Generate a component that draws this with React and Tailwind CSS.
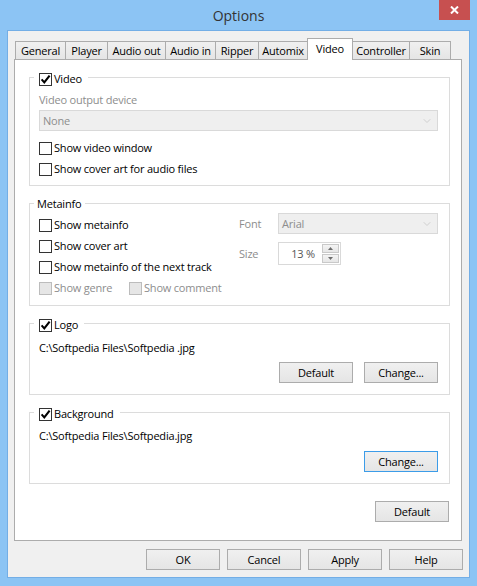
import { ChevronDown } from "lucide-react";

const font = "font-['Segoe_UI','Open_Sans',sans-serif]";

function Box({ checked, disabled }) {
  return (
    <span
      className={`w-[13px] h-[13px] border flex items-center justify-center shrink-0 ${
        disabled ? "border-[#bcbcbc] bg-[#e6e6e6]" : "border-[#333333] bg-white"
      }`}
    >
      {checked && (
        <svg width="11" height="11" viewBox="0 0 11 11">
          <path d="M1.6 5.4 L4.3 8.4 L9.6 1.7" fill="none" stroke="#000" strokeWidth="2.1" />
        </svg>
      )}
    </span>
  );
}

function Check({ label, checked, disabled, textClass = "" }) {
  return (
    <div className="flex items-center h-[16px] gap-[2px]">
      <Box checked={checked} disabled={disabled} />
      <span className={`whitespace-nowrap ${disabled ? "text-[#8d8d8d]" : "text-black"} ${textClass}`}>{label}</span>
    </div>
  );
}

function Btn({ children, focus }) {
  return (
    <div
      className={`w-[74px] h-[21px] flex items-center justify-center border bg-linear-to-b from-[#f0f0f0] to-[#e5e5e5] text-black ${
        focus ? "border-[#3c9ce8]" : "border-[#acacac]"
      }`}
    >
      {children}
    </div>
  );
}

function Select({ value, width }) {
  return (
    <div className={`${width} h-[21px] border border-[#d9d9d9] bg-[#efefef] flex items-center justify-between pl-[3px] pr-[4px] text-[#8d8d8d]`}>
      <span>{value}</span>
      <ChevronDown size={12} strokeWidth={1.5} className="text-[#c4c4c4]" />
    </div>
  );
}

function Group({ label, labelTop, height, children }) {
  return (
    <div className={`relative ml-[14px] w-[421px] ${height} border border-[#dcdcdc]`}>
      <div className={`absolute ${labelTop} left-[4px] bg-white flex items-center`}>{label}</div>
      {children}
    </div>
  );
}

const tabs = [
  ["General", "w-[50px]"],
  ["Player", "w-[42px]"],
  ["Audio out", "w-[58px]"],
  ["Audio in", "w-[50px]"],
  ["Ripper", "w-[43px]"],
  ["Automix", "w-[49px]"],
  ["Video", "w-[46px]"],
  ["Controller", "w-[57px]"],
  ["Skin", "w-[42px]"],
];

export default function App() {
  return (
    <div className={`w-[477px] h-[586px] bg-[#8cc4f4] flex flex-col text-[11px] tracking-[-0.2px] leading-[16px] ${font}`}>
      {/* title bar */}
      <div className="relative h-[30px] flex items-center justify-center">
        <span className="text-[14px] tracking-normal text-[#333333] mt-[1px]">Options</span>
        <div className="absolute right-[7px] top-0 w-[31px] h-[20px] bg-[#c75050] flex items-center justify-center">
          <svg width="9" height="8" viewBox="0 0 9 8">
            <path d="M1 0.5 L8 7.5 M8 0.5 L1 7.5" stroke="#fff" strokeWidth="2" />
          </svg>
        </div>
      </div>

      {/* client */}
      <div className="ml-[7px] w-[463px] h-[548px] border border-[#73aee6] bg-[#f0f0f0] flex flex-col">
        {/* tab strip */}
        <div className="mt-[7px] pl-[7px] h-[21px] flex items-end">
          {tabs.map(([name, w]) =>
            name === "Video" ? (
              <div
                key={name}
                className={`${w} h-[22px] -mb-px relative z-10 bg-white border border-b-0 border-[#acacac] flex items-center justify-center pb-[2px] text-black`}
              >
                {name}
              </div>
            ) : (
              <div
                key={name}
                className={`${w} h-[18px] border-t border-l border-[#acacac] bg-linear-to-b from-[#f0f0f0] to-[#e5e5e5] flex items-center justify-center text-black ${
                  name === "Skin" ? "border-r" : ""
                } ${name === "Controller" ? "-ml-px" : ""}`}
              >
                {name}
              </div>
            )
          )}
        </div>

        {/* panel */}
        <div className="ml-[6px] w-[448px] h-[482px] border border-[#acacac] bg-white flex flex-col">
          <div className="mt-[17px]">
            <Group
              height="h-[109px]"
              labelTop="-top-[7px]"
              label={
                <div className="pl-[5px] pr-[6px]">
                  <Check label="Video" checked />
                </div>
              }
            >
              <div className="pl-[9px] pt-[14px] flex flex-col">
                <div className="h-[16px] text-[#8d8d8d]">Video output device</div>
                <div className="mt-[2px]">
                  <Select value="None" width="w-[399px]" />
                </div>
                <div className="mt-[9px] flex flex-col gap-[5px]">
                  <Check label="Show video window" />
                  <Check label="Show cover art for audio files" />
                </div>
              </div>
            </Group>
          </div>

          <div className="mt-[17px]">
            <Group
              height="h-[103px]"
              labelTop="-top-[8px]"
              label={<div className="pl-[3px] pr-[4px] h-[16px] text-black">Metainfo</div>}
            >
              <div className="flex pt-[9px]">
                <div className="w-[209px] pl-[9px] pt-[4px] flex flex-col gap-[5px]">
                  <Check label="Show metainfo" />
                  <Check label="Show cover art" />
                  <Check label="Show metainfo of the next track" />
                  <div className="flex items-center">
                    <Check label="Show genre" disabled textClass="w-[75px]" />
                    <Check label="Show comment" disabled />
                  </div>
                </div>
                <div className="flex flex-col">
                  <div className="flex items-center h-[21px]">
                    <span className="w-[39px] text-[#8d8d8d]">Font</span>
                    <Select value="Arial" width="w-[160px]" />
                  </div>
                  <div className="flex items-center h-[23px] mt-[8px]">
                    <span className="w-[39px] text-[#8d8d8d]">Size</span>
                    <div className="w-[63px] h-[23px] border border-[#d9d9d9] flex">
                      <div className="flex-1 flex items-center justify-end pr-[7px] text-[#555555]">13 %</div>
                      <div className="w-[17px] flex flex-col my-[1px] mr-[1px] gap-px">
                        <div className="flex-1 bg-linear-to-b from-[#f4f4f4] to-[#e6e6e6] border border-[#c9c9c9] flex items-center justify-center">
                          <svg width="5" height="3" viewBox="0 0 5 3"><path d="M0 3 L2.5 0 L5 3Z" fill="#6d6d6d" /></svg>
                        </div>
                        <div className="flex-1 bg-linear-to-b from-[#f4f4f4] to-[#e6e6e6] border border-[#c9c9c9] flex items-center justify-center">
                          <svg width="5" height="3" viewBox="0 0 5 3"><path d="M0 0 L2.5 3 L5 0Z" fill="#6d6d6d" /></svg>
                        </div>
                      </div>
                    </div>
                  </div>
                </div>
              </div>
            </Group>
          </div>

          <div className="mt-[17px]">
            <Group
              height="h-[72px]"
              labelTop="-top-[7px]"
              label={
                <div className="pl-[5px] pr-[6px]">
                  <Check label="Logo" checked />
                </div>
              }
            >
              <div className="pl-[9px] pr-[11px] pt-[16px] flex flex-col">
                <div className="h-[16px] text-black">C:\Softpedia Files\Softpedia .jpg</div>
                <div className="mt-[6px] flex justify-end gap-[11px]">
                  <Btn>Default</Btn>
                  <Btn>Change...</Btn>
                </div>
              </div>
            </Group>
          </div>

          <div className="mt-[17px]">
            <Group
              height="h-[72px]"
              labelTop="-top-[7px]"
              label={
                <div className="pl-[5px] pr-[6px]">
                  <Check label="Background" checked />
                </div>
              }
            >
              <div className="pl-[9px] pr-[11px] pt-[15px] flex flex-col">
                <div className="h-[16px] text-black">C:\Softpedia Files\Softpedia.jpg</div>
                <div className="mt-[7px] flex justify-end">
                  <Btn focus>Change...</Btn>
                </div>
              </div>
            </Group>
          </div>

          <div className="mt-[17px] self-end mr-[12px]">
            <Btn>Default</Btn>
          </div>
        </div>

        {/* dialog buttons */}
        <div className="mt-[8px] flex justify-end gap-[7px] pr-[6px]">
          <Btn>OK</Btn>
          <Btn>Cancel</Btn>
          <Btn>Apply</Btn>
          <Btn>Help</Btn>
        </div>
      </div>
    </div>
  );
}
